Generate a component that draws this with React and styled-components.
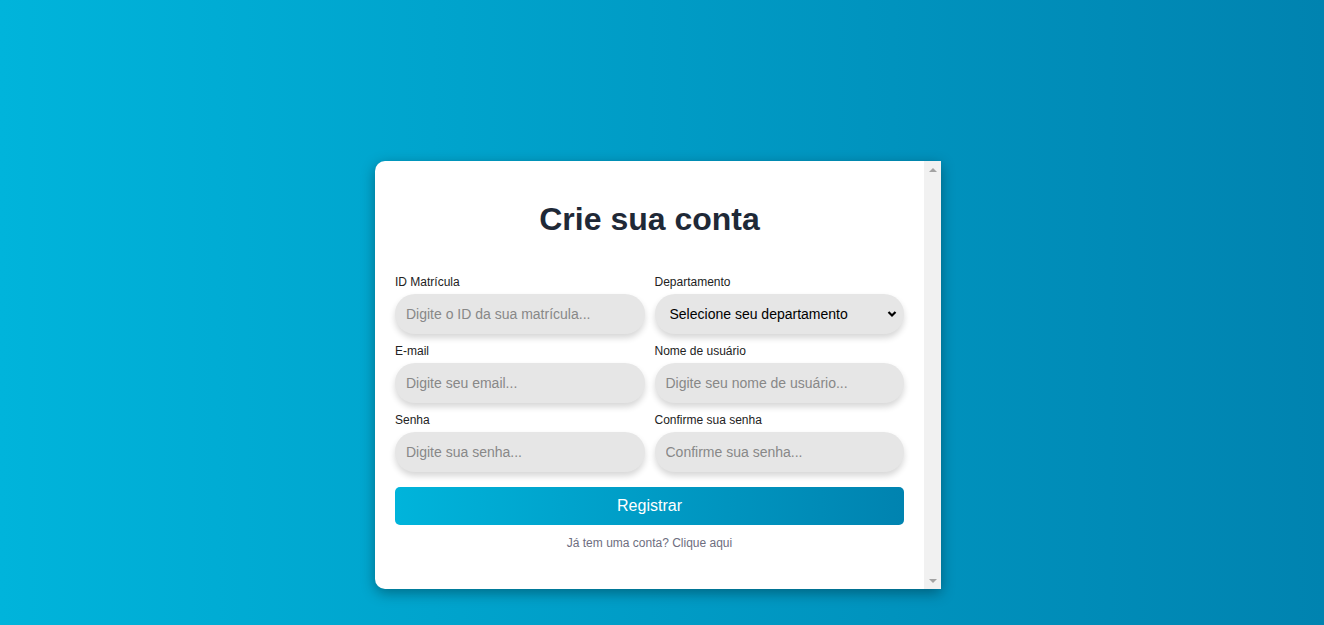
import React from "react";
import styled, { createGlobalStyle } from "styled-components";

const GlobalStyle = createGlobalStyle`
	html, body {
		margin: 0;
		padding: 0;
	}
	body {
		font-family: "Liberation Sans", Arial, sans-serif;
	}
	* {
		box-sizing: border-box;
	}
`;

const SCPage = styled.div`
	min-height: 625px;
	background: linear-gradient(to right, #00b4db, #0083b0);
	display: flex;
	justify-content: center;
	align-items: flex-start;
	padding: 161px 8px 0 0;
`;

const SCCard = styled.div`
	width: 566px;
	height: 428px;
	display: flex;
	background: #fff;
	border-radius: 10px 0 0 10px;
	box-shadow: 0 4px 14px rgba(0, 0, 0, 0.35);
	overflow: hidden;
`;

const SCContent = styled.div`
	flex: 1;
	min-width: 0;
	padding: 20px;
	overflow: hidden;
`;

// the classic scrollbar gutter seen at the card's right edge
const SCScrollTrack = styled.div`
	width: 17px;
	flex-shrink: 0;
	background: #f1f1f1;
	display: flex;
	flex-direction: column;
	justify-content: space-between;
	align-items: center;
	padding: 7px 0 6px;
`;

const SCArrow = styled.span`
	width: 0;
	height: 0;
	border-left: 4px solid transparent;
	border-right: 4px solid transparent;
	${props =>
		props.$down
			? "border-top: 4px solid #a3a3a3;"
			: "border-bottom: 4px solid #a3a3a3;"}
`;

const SCTitle = styled.h1`
	margin: 20px 0 37px;
	text-align: center;
	font-size: 32px;
	font-weight: bold;
	color: #1f2937;
`;

const SCGrid = styled.div`
	display: grid;
	grid-template-columns: 1fr 1fr;
	column-gap: 10px;
	row-gap: 10px;
`;

const SCField = styled.div`
	display: flex;
	flex-direction: column;
`;

const SCLabel = styled.label`
	font-size: 12px;
	color: #222;
	margin-bottom: 5px;
`;

const fieldBase = `
	width: 100%;
	height: 40px;
	border: none;
	outline: none;
	border-radius: 20px;
	background: #e6e6e6;
	box-shadow: 0 4px 6px rgba(0, 0, 0, 0.16);
	font-family: "Liberation Sans", Arial, sans-serif;
	font-size: 14px;
`;

const SCInput = styled.input`
	${fieldBase}
	padding: 0 11px;
	color: #333;

	&::placeholder {
		color: #888;
	}
`;

const SCSelectWrap = styled.div`
	position: relative;
`;

const SCSelect = styled.select`
	${fieldBase}
	appearance: none;
	padding: 0 30px 0 15px;
	color: #000;
`;

const SCChevron = styled.svg`
	position: absolute;
	right: 6px;
	top: 15px;
	pointer-events: none;
`;

const SCButton = styled.button`
	display: block;
	width: 100%;
	height: 38px;
	margin-top: 15px;
	border: none;
	border-radius: 5px;
	background: linear-gradient(to right, #00b4db, #0083b0);
	color: #fff;
	font-family: "Liberation Sans", Arial, sans-serif;
	font-size: 16px;
	cursor: pointer;
`;

const SCFooter = styled.p`
	margin: 11px 0 20px;
	text-align: center;
	font-size: 12px;
	line-height: 14px;
`;

const SCLink = styled.a`
	color: #6e6e80;
	text-decoration: none;
`;

const FIELDS = [
	{ id: "matricula", label: "ID Matrícula", placeholder: "Digite o ID da sua matrícula..." },
	{ id: "departamento", label: "Departamento", select: true },
	{ id: "email", label: "E-mail", placeholder: "Digite seu email...", type: "email" },
	{ id: "usuario", label: "Nome de usuário", placeholder: "Digite seu nome de usuário..." },
	{ id: "senha", label: "Senha", placeholder: "Digite sua senha...", type: "password" },
	{ id: "confirmar", label: "Confirme sua senha", placeholder: "Confirme sua senha...", type: "password" }
];

function App() {
	return (
		<>
			<GlobalStyle />
			<SCPage>
				<SCCard>
					<SCContent>
						<SCTitle>Crie sua conta</SCTitle>
						<form onSubmit={event => event.preventDefault()}>
							<SCGrid>
								{FIELDS.map(field => (
									<SCField key={field.id}>
										<SCLabel htmlFor={field.id}>{field.label}</SCLabel>
										{field.select ? (
											<SCSelectWrap>
												<SCSelect id={field.id} defaultValue="">
													<option value="">Selecione seu departamento</option>
													<option value="ti">TI</option>
													<option value="rh">RH</option>
													<option value="financeiro">Financeiro</option>
												</SCSelect>
												<SCChevron width="12" height="10" viewBox="0 0 12 10">
													<path
														d="M2.5 3 L6 6.5 L9.5 3"
														fill="none"
														stroke="#000"
														strokeWidth="2.2"
													/>
												</SCChevron>
											</SCSelectWrap>
										) : (
											<SCInput
												id={field.id}
												type={field.type || "text"}
												placeholder={field.placeholder}
											/>
										)}
									</SCField>
								))}
							</SCGrid>
							<SCButton type="submit">Registrar</SCButton>
							<SCFooter>
								<SCLink href="#">Já tem uma conta? Clique aqui</SCLink>
							</SCFooter>
						</form>
					</SCContent>
					<SCScrollTrack>
						<SCArrow />
						<SCArrow $down />
					</SCScrollTrack>
				</SCCard>
			</SCPage>
		</>
	);
}

export default App;
